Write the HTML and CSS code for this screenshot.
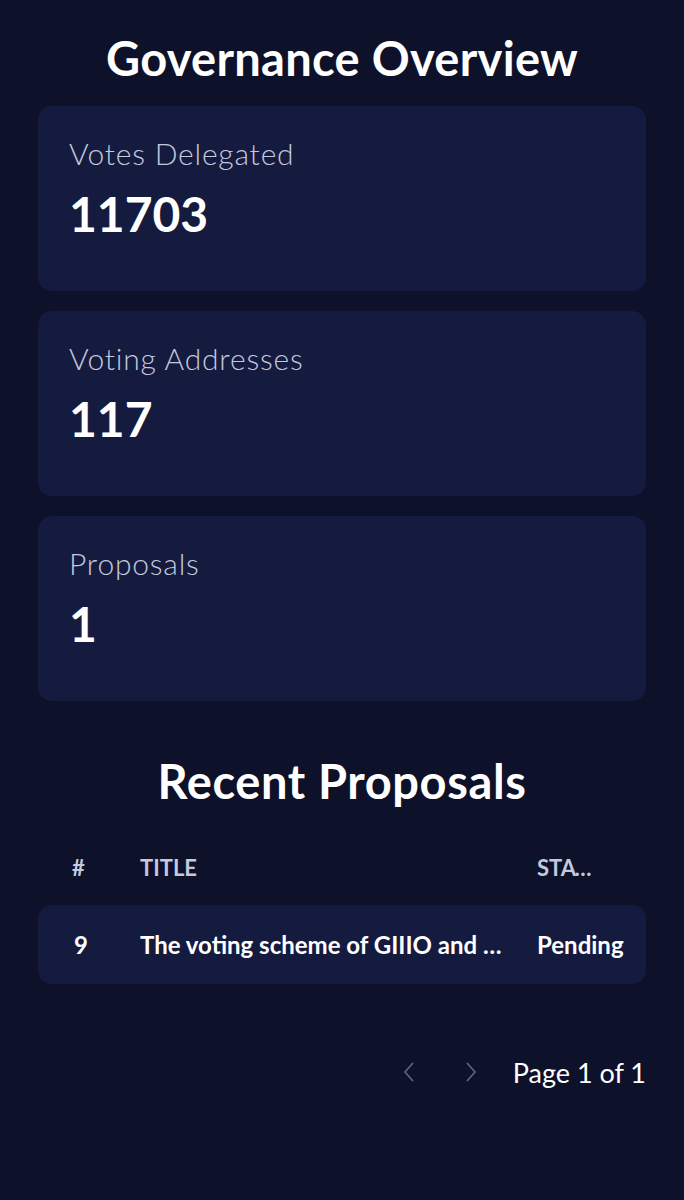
FILE: index.html
```html
<!DOCTYPE html>
<html>
    <head>
        <title>Governance Overview</title>
        <meta charset="utf-8">
        <link rel="stylesheet" href="styles.css">
    </head>
    <body>
        <main class="page">
            <h1 class="page-title">Governance Overview</h1>

            <div class="stats">
                <div class="stat-card">
                    <div class="stat-label">Votes Delegated</div>
                    <div class="stat-value">11703</div>
                </div>
                <div class="stat-card">
                    <div class="stat-label">Voting Addresses</div>
                    <div class="stat-value">117</div>
                </div>
                <div class="stat-card">
                    <div class="stat-label">Proposals</div>
                    <div class="stat-value">1</div>
                </div>
            </div>

            <h2 class="section-title">Recent Proposals</h2>

            <div class="proposals">
                <div class="proposal-head">
                    <span class="cell">#</span>
                    <span class="cell">TITLE</span>
                    <span class="cell status-head">STATUS</span>
                </div>
                <div class="proposal-row">
                    <span class="cell">9</span>
                    <span class="cell">The voting scheme of GIIIO and GFAL token holders</span>
                    <span class="cell">Pending</span>
                </div>
            </div>

            <div class="pager">
                <button class="pager-btn" aria-label="Previous page">
                    <svg width="14" height="24" viewBox="0 0 14 24"><path d="M11 3 L3 12 L11 21" fill="none" stroke="currentColor" stroke-width="1.6"/></svg>
                </button>
                <button class="pager-btn" aria-label="Next page">
                    <svg width="14" height="24" viewBox="0 0 14 24"><path d="M3 3 L11 12 L3 21" fill="none" stroke="currentColor" stroke-width="1.6"/></svg>
                </button>
                <span class="pager-text">Page 1 of 1</span>
            </div>
        </main>
    </body>
</html>
```

FILE: styles.css
```css
*
{
    box-sizing: border-box;
}
body
{
    margin: 0;
    padding: 0;
    background-color: #0d1129;
    color: #ffffff;
    font-family: Lato, "Noto Sans", sans-serif;
}
.page
{
    padding: 30px 38px 80px;
}
.page-title
{
    margin: 0 0 20px;
    font-size: 47px;
    font-weight: 700;
    letter-spacing: 0.3px;
    text-align: center;
    line-height: 56px;
}
.stats
{
    display: flex;
    flex-direction: column;
    gap: 20px;
}
.stat-card
{
    height: 185px;
    padding: 27px 31px;
    background-color: #151b3f;
    border-radius: 14px;
}
.stat-label
{
    font-size: 30px;
    font-weight: 300;
    letter-spacing: 0.8px;
    color: #c3c9de;
    line-height: 40px;
}
.stat-value
{
    margin-top: 13px;
    font-size: 48px;
    font-weight: 700;
    line-height: 56px;
}
.section-title
{
    margin: 50px 0 22px;
    font-size: 47px;
    font-weight: 700;
    letter-spacing: 0.6px;
    text-align: center;
    line-height: 60px;
}
.proposals
{
    display: flex;
    flex-direction: column;
}
.proposal-head,
.proposal-row
{
    display: grid;
    grid-template-columns: 68px 1fr 109px;
    padding: 0 0 0 34px;
    align-items: center;
}
.proposal-head
{
    height: 68px;
    font-size: 22px;
    font-weight: 700;
    color: #c3c9de;
}
.status-head
{
    max-width: 64px;
}
.proposal-row
{
    height: 79px;
    margin-top: 4px;
    background-color: #151b3f;
    border-radius: 14px;
    font-size: 24px;
    font-weight: 700;
}
.cell
{
    white-space: nowrap;
    overflow: hidden;
    text-overflow: ellipsis;
}
.proposal-row .cell:nth-child(1)
{
    padding-left: 2px;
}
.proposal-row .cell:nth-child(2)
{
    padding-right: 30px;
}
.pager
{
    display: flex;
    justify-content: flex-end;
    align-items: center;
    margin-top: 68px;
}
.pager-btn
{
    width: 62px;
    height: 40px;
    padding: 0;
    border: none;
    background: none;
    color: #5f6688;
    display: flex;
    align-items: center;
    justify-content: center;
}
.pager-text
{
    margin-left: 11px;
    font-size: 27px;
    font-weight: 400;
}
```
